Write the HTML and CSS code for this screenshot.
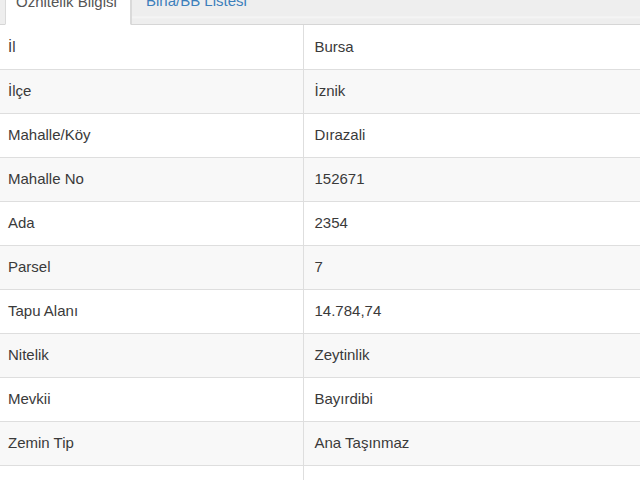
FILE: index.html
```html
<!DOCTYPE html>
<html lang="tr">
<head>
<meta charset="utf-8">
<title>Öznitelik Bilgisi</title>
<link rel="stylesheet" href="styles.css">
</head>
<body>
<div class="tabs">
  <div class="tab tab-active">Öznitelik Bilgisi</div>
  <div class="tab tab-link">Bina/BB Listesi</div>
</div>
<table class="info">
  <tbody>
    <tr><td class="key">İl</td><td class="val">Bursa</td></tr>
    <tr><td class="key">İlçe</td><td class="val">İznik</td></tr>
    <tr><td class="key">Mahalle/Köy</td><td class="val">Dırazali</td></tr>
    <tr><td class="key">Mahalle No</td><td class="val">152671</td></tr>
    <tr><td class="key">Ada</td><td class="val">2354</td></tr>
    <tr><td class="key">Parsel</td><td class="val">7</td></tr>
    <tr><td class="key">Tapu Alanı</td><td class="val">14.784,74</td></tr>
    <tr><td class="key">Nitelik</td><td class="val">Zeytinlik</td></tr>
    <tr><td class="key">Mevkii</td><td class="val">Bayırdibi</td></tr>
    <tr><td class="key">Zemin Tip</td><td class="val">Ana Taşınmaz</td></tr>
    <tr><td class="key">&nbsp;</td><td class="val">&nbsp;</td></tr>
  </tbody>
</table>
</body>
</html>
```
FILE: styles.css
```css
html, body {
  margin: 0;
  padding: 0;
  background: #ffffff;
  overflow: hidden;
}
body {
  font-family: "Liberation Sans", Arial, sans-serif;
  font-size: 15px;
  color: #3a3a3a;
  width: 640px;
  height: 480px;
}
.tabs {
  display: flex;
  margin-top: -20px;
  padding-left: 5px;
  background: #eeeeee;
  border-bottom: 1px solid #d6d6d6;
  height: 44px;
}
.tab {
  box-sizing: border-box;
  line-height: 20px;
  padding: 11px 14px 13px 10px;
  white-space: nowrap;
}
.tab-active {
  width: 126px;
  background: #ffffff;
  border: 1px solid #dadada;
  border-bottom-color: #ffffff;
  height: 45px;
  color: #555555;
}
.tab-link {
  flex: 1;
  height: 44px;
  padding-left: 14px;
  color: #3d7fbb;
  border-left: 1px solid #dadada;
  background: linear-gradient(#eeeeee 0, #eeeeee 36px, #f6f6f6 37px, #eeeeee 39px);
}
.info {
  width: 100%;
  border-collapse: collapse;
  border-spacing: 0;
}
.info tr {
  height: 44px;
}
.info tr:nth-child(even) {
  background: #f8f8f8;
}
.info td {
  box-sizing: border-box;
  height: 44px;
  padding: 0;
  border-bottom: 1px solid #dedede;
  vertical-align: middle;
  line-height: 20px;
}
.key {
  width: 303px;
  padding-left: 8px !important;
  border-right: 1px solid #dedede;
}
.val {
  padding-left: 11px !important;
}
```
